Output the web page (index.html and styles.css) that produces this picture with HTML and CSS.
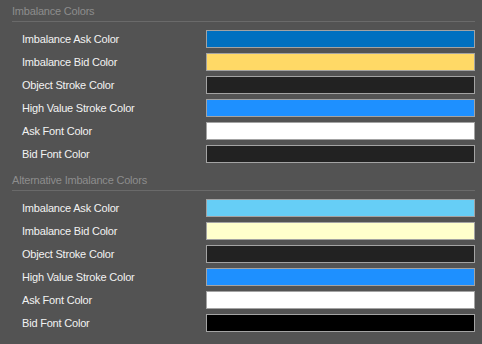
FILE: index.html
```html
<!DOCTYPE html>
<html>

<head>
    <meta charset="utf-8" />
    <title>Imbalance Colors</title>
    <meta name="viewport" content="width=device-width, initial-scale=1">
    <link rel="stylesheet" href="styles.css">
</head>

<body>
    <div class="panel">
        <div class="section">
            <div class="section-title">Imbalance Colors</div>
            <div class="rows">
                <div class="row"><span class="label">Imbalance Ask Color</span><div class="swatch ask"></div></div>
                <div class="row"><span class="label">Imbalance Bid Color</span><div class="swatch bid"></div></div>
                <div class="row"><span class="label">Object Stroke Color</span><div class="swatch dark"></div></div>
                <div class="row"><span class="label">High Value Stroke Color</span><div class="swatch high"></div></div>
                <div class="row"><span class="label">Ask Font Color</span><div class="swatch white"></div></div>
                <div class="row"><span class="label">Bid Font Color</span><div class="swatch dark"></div></div>
            </div>
        </div>
        <div class="section">
            <div class="section-title">Alternative Imbalance Colors</div>
            <div class="rows">
                <div class="row"><span class="label">Imbalance Ask Color</span><div class="swatch alt-ask"></div></div>
                <div class="row"><span class="label">Imbalance Bid Color</span><div class="swatch alt-bid"></div></div>
                <div class="row"><span class="label">Object Stroke Color</span><div class="swatch dark"></div></div>
                <div class="row"><span class="label">High Value Stroke Color</span><div class="swatch high"></div></div>
                <div class="row"><span class="label">Ask Font Color</span><div class="swatch white"></div></div>
                <div class="row"><span class="label">Bid Font Color</span><div class="swatch black"></div></div>
            </div>
        </div>
    </div>
</body>

</html>
```

FILE: styles.css
```css
/* base */

body {
    margin: 0;
    background-color: #535353;
    font-family: "Liberation Sans", Arial, sans-serif;
    font-size: 11px;
    letter-spacing: -0.2px;
}

/* layout */

.panel {
    padding: 0 7px 0 12px;
}

.section {
    padding-bottom: 6px;
}

.section-title {
    color: #8d8d8d;
    line-height: 14px;
    padding: 4px 0 3px 0;
    border-bottom: 1px solid #6a6a6a;
}

.rows {
    display: flex;
    flex-direction: column;
    gap: 5px;
    padding-top: 8px;
}

.row {
    display: flex;
    align-items: center;
    height: 18px;
    padding-left: 10px;
}

.label {
    color: #f2f2f2;
    width: 184px;
}

/* swatches */

.swatch {
    flex: 1;
    height: 16px;
    border: 1px solid #a3a3a3;
}

.ask { background-color: #0070c0; }
.bid { background-color: #ffd966; }
.dark { background-color: #222222; }
.high { background-color: #1e90ff; }
.white { background-color: #ffffff; }
.black { background-color: #000000; }
.alt-ask { background-color: #66cef6; }
.alt-bid { background-color: #ffffcc; }
```
